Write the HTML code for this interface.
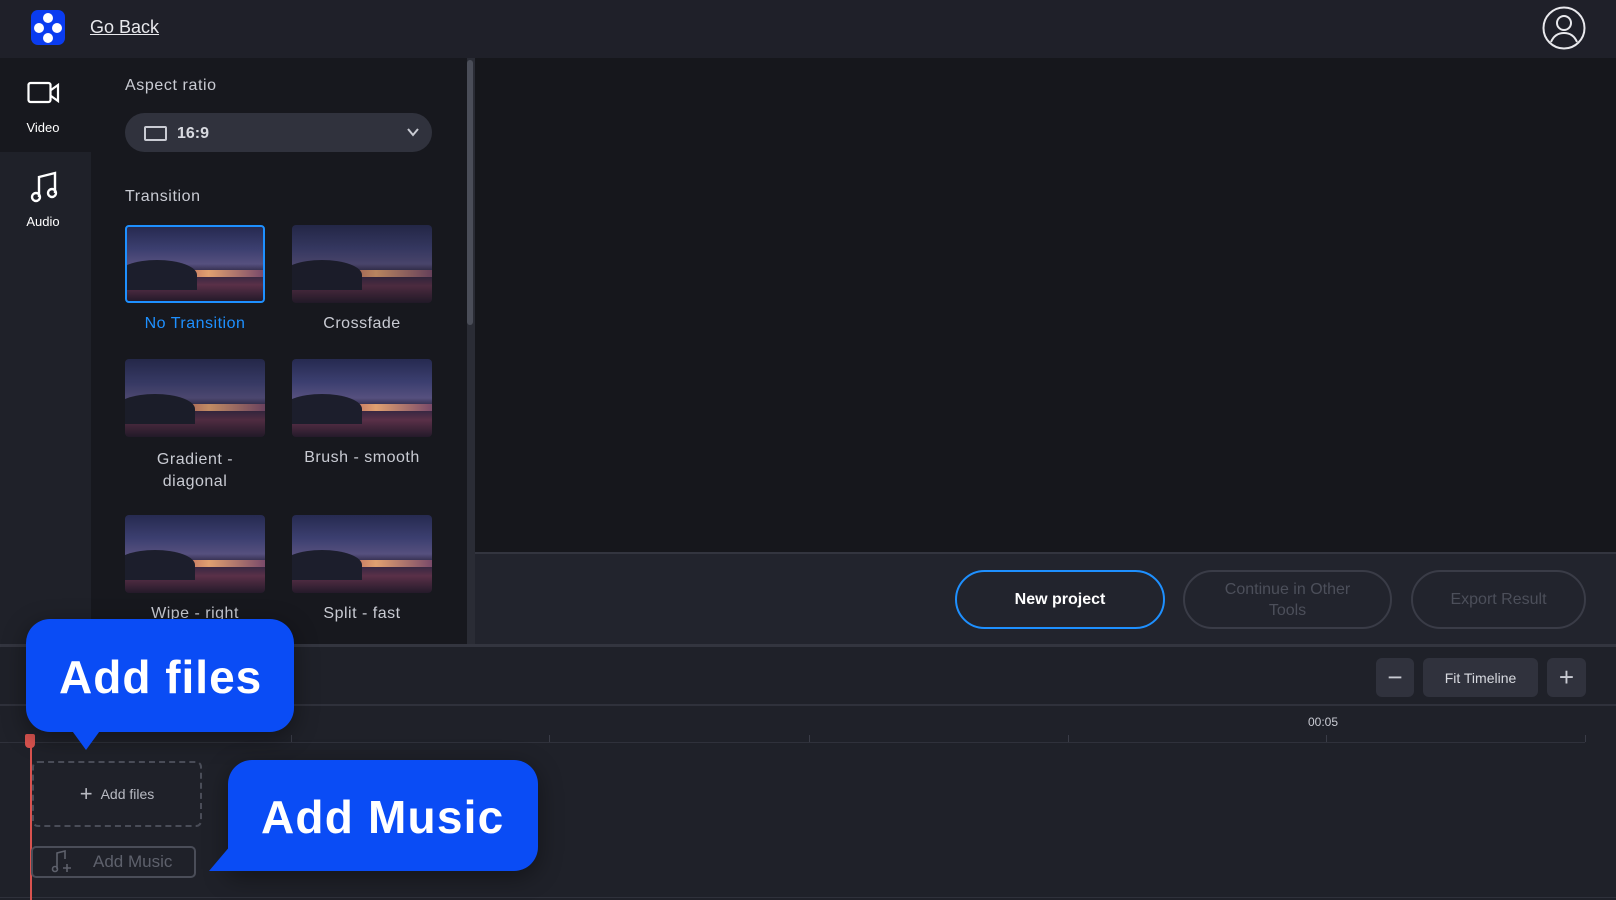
<!DOCTYPE html>
<html><head><meta charset="utf-8"><style>
*{box-sizing:border-box;margin:0;padding:0}
body{width:1616px;height:900px;overflow:hidden;background:#1f2129;font-family:"Liberation Sans",sans-serif;color:#fff;position:relative}
.abs{position:absolute}
.thumb{position:absolute;width:140px;height:78px;border-radius:4px;overflow:hidden;
background:linear-gradient(180deg,#262a50 0%,#3c3f70 30%,#56507e 50%,#2a2440 62%,#5a3048 78%,#241a2a 100%)}
.thumb:after{content:"";position:absolute;left:0;right:0;top:58%;height:7px;background:linear-gradient(90deg,#101020,#b05a5a 35%,#e0a070 60%,#7a4a6a)}
.thumb:before{content:"";position:absolute;left:-10px;top:45%;width:80px;height:30px;border-radius:50% 50% 0 0;background:#1c1e2c;z-index:1}
.lbl{position:absolute;width:160px;text-align:center;font-size:16px;color:#c9cbd3;letter-spacing:.5px}
.btn{position:absolute;border-radius:30px;display:flex;align-items:center;justify-content:center;text-align:center;font-size:16px}
</style></head><body>
<div class="abs" style="left:0;top:0;width:1616px;height:58px;background:#1f2029"></div>
<div class="abs" style="left:31px;top:10px;width:34px;height:35px;background:#0a3cf0;border-radius:7px"></div>
<div class="abs" style="left:43px;top:13px;width:10px;height:10px;border-radius:50%;background:#fff"></div>
<div class="abs" style="left:34px;top:23px;width:10px;height:10px;border-radius:50%;background:#fff"></div>
<div class="abs" style="left:52px;top:23px;width:10px;height:10px;border-radius:50%;background:#fff"></div>
<div class="abs" style="left:43px;top:33px;width:10px;height:10px;border-radius:50%;background:#fff"></div>
<div class="abs" style="left:90px;top:17px;font-size:18px;text-decoration:underline;color:#e8e8ec">Go Back</div>
<svg class="abs" style="left:1542px;top:6px" width="44" height="44" viewBox="0 0 44 44" fill="none" stroke="#e8e8ec" stroke-width="2"><circle cx="22" cy="22" r="20.5"/><circle cx="22" cy="17" r="7"/><path d="M9 36c3-7 8-9 13-9s10 2 13 9"/></svg>
<div class="abs" style="left:0;top:58px;width:91px;height:94px;background:#17181e"></div>
<div class="abs" style="left:91px;top:58px;width:376px;height:586px;background:#17181e"></div>
<svg class="abs" style="left:27px;top:80px" width="34" height="26" viewBox="0 0 34 26" fill="none" stroke="#fff" stroke-width="2.2"><rect x="1.5" y="3" width="22" height="19" rx="2"/><path d="M24 10l7-5v16l-7-5"/></svg>
<div class="abs" style="left:0;top:120px;width:86px;text-align:center;font-size:13px">Video</div>
<svg class="abs" style="left:30px;top:171px" width="30" height="32" viewBox="0 0 30 32" fill="none" stroke="#fff" stroke-width="2.4"><path d="M9 26V6l16-4v20"/><circle cx="6" cy="26" r="4"/><circle cx="22" cy="22" r="4"/></svg>
<div class="abs" style="left:0;top:214px;width:86px;text-align:center;font-size:13px">Audio</div>
<div class="abs" style="left:125px;top:77px;font-size:16px;color:#c9cbd3;letter-spacing:.6px">Aspect ratio</div>
<div class="abs" style="left:125px;top:113px;width:307px;height:39px;border-radius:20px;background:#30323d"></div>
<div class="abs" style="left:144px;top:126px;width:23px;height:15px;border:2px solid #c9cbd3;border-radius:2px"></div>
<div class="abs" style="left:177px;top:125px;font-size:16px;font-weight:bold;color:#d8dae0">16:9</div>
<svg class="abs" style="left:407px;top:128px" width="12" height="9" viewBox="0 0 12 9" fill="none" stroke="#c9cbd3" stroke-width="2"><path d="M1 1l5 6 5-6"/></svg>
<div class="abs" style="left:125px;top:188px;font-size:16px;color:#c9cbd3;letter-spacing:.6px">Transition</div>
<div class="thumb" style="left:125px;top:225px;border:2px solid #1e90ff"></div>
<div class="thumb" style="left:292px;top:225px;opacity:.8"></div>
<div class="thumb" style="left:125px;top:359px;opacity:.85"></div>
<div class="thumb" style="left:292px;top:359px"></div>
<div class="thumb" style="left:125px;top:515px"></div>
<div class="thumb" style="left:292px;top:515px"></div>
<div class="lbl" style="left:115px;top:315px;color:#1e90ff">No Transition</div>
<div class="lbl" style="left:282px;top:315px">Crossfade</div>
<div class="lbl" style="left:115px;top:449px;line-height:22px">Gradient -<br>diagonal</div>
<div class="lbl" style="left:282px;top:449px">Brush - smooth</div>
<div class="lbl" style="left:115px;top:605px;height:17px;overflow:hidden">Wipe - right</div>
<div class="lbl" style="left:282px;top:605px">Split - fast</div>
<div class="abs" style="left:467px;top:58px;width:8px;height:586px;background:#2a2c35"></div>
<div class="abs" style="left:467px;top:60px;width:6px;height:265px;border-radius:3px;background:#4a4d58"></div>
<div class="abs" style="left:475px;top:58px;width:1141px;height:494px;background:#16171c"></div>
<div class="abs" style="left:475px;top:552px;width:1141px;height:2px;background:#33353f"></div>
<div class="abs" style="left:475px;top:554px;width:1141px;height:90px;background:#22242d"></div>
<div class="btn" style="left:955px;top:570px;width:210px;height:59px;border:2px solid #1e90ff;font-weight:bold;color:#fff">New project</div>
<div class="btn" style="left:1183px;top:570px;width:209px;height:59px;border:2px solid #3a3c47;color:#4c4f5a;line-height:21px">Continue in Other<br>Tools</div>
<div class="btn" style="left:1411px;top:570px;width:175px;height:59px;border:2px solid #3a3c47;color:#4c4f5a">Export Result</div>
<div class="abs" style="left:0;top:644px;width:1616px;height:3px;background:#33353f"></div>
<div class="abs" style="left:0;top:704px;width:1616px;height:2px;background:#2f313b"></div>
<div class="abs" style="left:0;top:742px;width:1585px;height:1px;background:#2f313b"></div>
<div class="abs" style="left:0;top:897px;width:1616px;height:1px;background:#2f313b"></div>
<div class="btn" style="left:1376px;top:658px;width:38px;height:39px;border-radius:6px;background:#30323d;font-size:26px;color:#c9cbd3">−</div>
<div class="btn" style="left:1423px;top:658px;width:115px;height:39px;border-radius:6px;background:#30323d;font-size:14px;color:#d8dae0">Fit Timeline</div>
<div class="btn" style="left:1547px;top:658px;width:39px;height:39px;border-radius:6px;background:#30323d;font-size:26px;color:#c9cbd3">+</div>
<div class="abs" style="left:1308px;top:715px;font-size:12px;color:#c9cbd3">00:05</div>
<div class="abs" style="left:291px;top:735px;width:1px;height:7px;background:#3a3c47"></div>
<div class="abs" style="left:549px;top:735px;width:1px;height:7px;background:#3a3c47"></div>
<div class="abs" style="left:809px;top:735px;width:1px;height:7px;background:#3a3c47"></div>
<div class="abs" style="left:1068px;top:735px;width:1px;height:7px;background:#3a3c47"></div>
<div class="abs" style="left:1326px;top:735px;width:1px;height:7px;background:#3a3c47"></div>
<div class="abs" style="left:1585px;top:735px;width:1px;height:7px;background:#3a3c47"></div>
<div class="abs" style="left:30px;top:734px;width:2px;height:166px;background:#d9534f"></div>
<div class="abs" style="left:25px;top:734px;width:10px;height:14px;background:#d9534f;border-radius:2px 2px 4px 4px"></div>
<div class="abs" style="left:32px;top:761px;width:170px;height:66px;border:2px dashed #4a4d58;border-radius:6px;display:flex;align-items:center;justify-content:center;font-size:14px;color:#b8bac2"><span style="font-size:22px;margin-right:8px;font-weight:300">+</span>Add files</div>
<div class="abs" style="left:31px;top:846px;width:165px;height:32px;border:2px solid #4a4d58;border-radius:5px;display:flex;align-items:center;font-size:17px;color:#5e616c">
<svg style="margin-left:18px;margin-right:20px" width="22" height="24" viewBox="0 0 22 24" fill="none" stroke="#5e616c" stroke-width="1.6"><path d="M6 19V3l8-2v8"/><circle cx="4" cy="19" r="2.5"/><path d="M16 14v8M12 18h8"/></svg>Add Music</div>
<div class="abs" style="left:26px;top:619px;width:268px;height:113px;background:#0a4cf5;border-radius:24px;box-shadow:0 6px 24px rgba(0,0,0,.4)"></div>
<div class="abs" style="left:70px;top:728px;width:0;height:0;border-left:16px solid transparent;border-right:16px solid transparent;border-top:22px solid #0a4cf5"></div>
<div class="abs" style="left:59px;top:650px;font-size:46px;font-weight:bold;color:#fff;letter-spacing:1px">Add files</div>
<div class="abs" style="left:228px;top:760px;width:310px;height:111px;background:#0a4cf5;border-radius:24px 24px 24px 0;box-shadow:0 6px 24px rgba(0,0,0,.4)"></div>
<div class="abs" style="left:209px;top:845px;width:0;height:0;border-right:22px solid #0a4cf5;border-top:26px solid transparent"></div>
<div class="abs" style="left:261px;top:790px;font-size:46px;font-weight:bold;color:#fff;letter-spacing:1.2px">Add Music</div>
</body></html>
